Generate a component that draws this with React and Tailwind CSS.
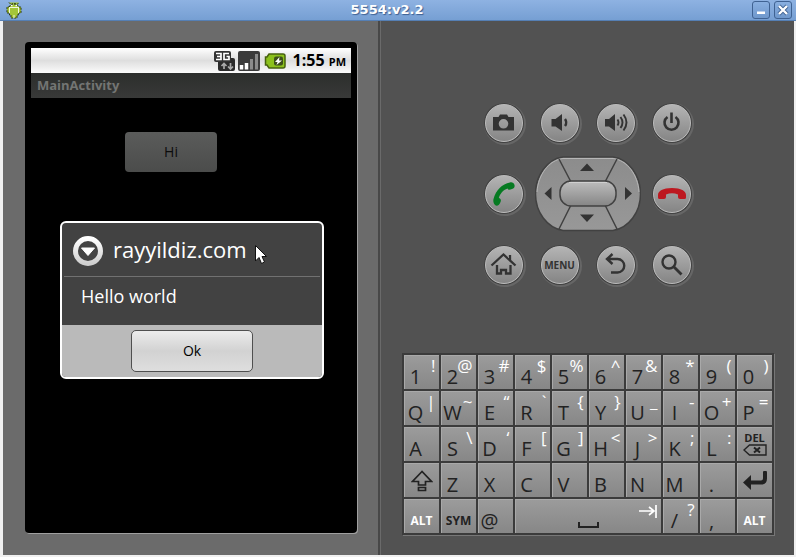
import React from "react";

const keyRows = [
  [["1", "!"], ["2", "@"], ["3", "#"], ["4", "$"], ["5", "%"], ["6", "^"], ["7", "&"], ["8", "*"], ["9", "("], ["0", ")"]],
  [["Q", "|"], ["W", "~"], ["E", "“"], ["R", "`"], ["T", "{"], ["Y", "}"], ["U", "_"], ["I", "-"], ["O", "+"], ["P", "="]],
  [["A", ""], ["S", "\\"], ["D", "‘"], ["F", "["], ["G", "]"], ["H", "<"], ["J", ">"], ["K", ";"], ["L", ":"]],
];

const keyStyle =
  "h-[34px] border-t border-l border-[#a9a9a9] bg-linear-to-b from-[#9b9b9b] to-[#878787] text-[#222]";

function Key({ main, alt }) {
  return (
    <button type="button" className={`${keyStyle} grid`}>
      <span className="col-start-1 row-start-1 w-[22px] self-end text-center text-xl leading-6">{main}</span>
      {alt && (
        <span className="col-start-1 row-start-1 self-start justify-self-end pr-[3px] text-[17px] leading-5 text-white">{alt}</span>
      )}
    </button>
  );
}

function IconKey({ label, className = "", children }) {
  return (
    <button type="button" aria-label={label} className={`${keyStyle} flex items-center justify-center ${className}`}>
      {children}
    </button>
  );
}

function WordKey({ children, className }) {
  return (
    <button type="button" className={`${keyStyle} flex items-end justify-center pb-1 text-xs leading-4 font-bold ${className}`}>
      {children}
    </button>
  );
}

function Keyboard() {
  return (
    <div className="grid grid-cols-[repeat(10,35px)] gap-[2px] bg-[#3b3b3b] p-[2px] shadow-[1px_1px_0_#777]">
      {keyRows.flat().map(([main, alt]) => (
        <Key key={main} main={main} alt={alt} />
      ))}
      <button type="button" aria-label="DEL" className={`${keyStyle} flex flex-col items-center pt-1`}>
        <span className="text-[11px] leading-3 font-bold">DEL</span>
        <svg width="24" height="12" viewBox="0 0 24 12" fill="none" stroke="#222" strokeWidth="1.4">
          <path d="M1 6 6.500 1H23V11H6.500Z" />
          <path d="m11 3.500 6 5M17 3.500l-6 5" strokeWidth="2" />
        </svg>
      </button>
      <IconKey label="Shift">
        <svg width="22" height="22" viewBox="0 0 22 22" fill="none" stroke="#222" strokeWidth="1.700">
          <path d="M11 1.500 1.500 11.500H7.500V15H14.500V11.500H20.500Z" />
          <path d="M7.500 17.500H14.500V20.500H7.500Z" />
        </svg>
      </IconKey>
      {["Z", "X", "C", "V", "B", "N", "M", "."].map((k) => (
        <Key key={k} main={k} />
      ))}
      <IconKey label="Enter">
        <svg width="26" height="20" viewBox="0 0 26 20">
          <path d="M23 1.500V7.500Q23 11.500 19 11.500H8" fill="none" stroke="#222" strokeWidth="4" strokeLinecap="round" />
          <path d="M1 11.500 9 4V19Z" fill="#222" />
        </svg>
      </IconKey>
      <WordKey className="text-white">ALT</WordKey>
      <WordKey className="text-[#222]">SYM</WordKey>
      <Key main="@" />
      <IconKey label="Space" className="col-span-4">
        <svg width="144" height="33" viewBox="0 0 144 33" fill="none">
          <path d="M63 22V27H82V22" stroke="#222" strokeWidth="2" />
          <path d="M123 11H137M133 7 138 11 133 15M140 5V18" stroke="#fff" strokeWidth="1.700" />
        </svg>
      </IconKey>
      <Key main="/" alt="?" />
      <Key main="," />
      <WordKey className="text-white">ALT</WordKey>
    </div>
  );
}

function RoundButton({ label, children }) {
  return (
    <button
      type="button"
      aria-label={label}
      className="flex size-[38px] items-center justify-center rounded-full border border-[#bcbcbc] bg-linear-to-b from-[#b4b4b4] to-[#858585] text-[#333] shadow-[0_0_0_1px_#414141,1px_1px_0_2px_#666]"
    >
      {children}
    </button>
  );
}

function Glyph({ children }) {
  return (
    <svg width="28" height="28" viewBox="0 0 28 28" className="shrink-0" fill="none" stroke="currentColor" strokeWidth="2.400">
      {children}
    </svg>
  );
}

function DPad() {
  return (
    <svg width="106" height="76" viewBox="0 0 106 76" className="-my-px" role="group" aria-label="Directional pad">
      <defs>
        <linearGradient id="pad" x1="0" y1="0" x2="0" y2="1">
          <stop offset="0" stopColor="#8c8c8c" />
          <stop offset="1" stopColor="#989898" />
        </linearGradient>
        <linearGradient id="pill" x1="0" y1="0" x2="0" y2="1">
          <stop offset="0" stopColor="#bebebe" />
          <stop offset="1" stopColor="#858585" />
        </linearGradient>
      </defs>
      <path
        d="M28 1H78C94 3 105.500 20 105.500 38S94 72 78 74.500H28C12 72 .5 56 .5 38S12 3 28 1Z"
        fill="url(#pad)"
        stroke="#414141"
        strokeWidth="1.500"
      />
      <path d="M2 36C3 19 14 4 28 2.500H78C92 4 103 19 104 36" fill="none" stroke="#b6b6b6" />
      <path d="M24 3 36 26M82 3 70 26M36 49 24 73M70 49 82 73" stroke="#414141" strokeWidth="1.500" />
      <rect x="25" y="25" width="56" height="25" rx="11" fill="url(#pill)" stroke="#414141" strokeWidth="1.500" />
      <path d="M34 26.500H72" stroke="#d0d0d0" />
      <path d="M45 15 52 7.500 59 15ZM45 58.500H59L52 66ZM16.500 31V44L9.500 37.500ZM90 31V44L97 37.500Z" fill="#333" />
    </svg>
  );
}

function HardwareControls() {
  return (
    <div className="flex w-[206px] flex-col gap-[15px]">
      <div className="flex justify-between">
        <RoundButton label="Camera">
          <Glyph>
            <path fillRule="evenodd" stroke="none" fill="currentColor" d="M3 8H8.500L10 5.500H17L18.500 8H24V21.500H3ZM13.500 10A4.800 4.800 0 1 0 13.500 19.600A4.800 4.800 0 1 0 13.500 10" />
          </Glyph>
        </RoundButton>
        <RoundButton label="Volume down">
          <Glyph>
            <path stroke="none" fill="currentColor" d="M5.500 10H9.500L16 5V22L9.500 17.500H5.500Z" />
            <path d="M19 10Q21.500 13.500 19 17" />
          </Glyph>
        </RoundButton>
        <RoundButton label="Volume up">
          <Glyph>
            <path stroke="none" fill="currentColor" d="M3 10H7L13 5V22L7 17.500H3Z" />
            <path d="M15.500 10.500Q17.500 13.500 15.500 16.500M18.500 8Q22.500 13.500 18.500 19M21.500 5.500Q27.500 13.500 21.500 21.500" strokeWidth="1.900" />
          </Glyph>
        </RoundButton>
        <RoundButton label="Power">
          <Glyph>
            <path d="M13.500 3.500V14M9.500 8A7 7 0 1 0 17.500 8" strokeWidth="2.600" />
          </Glyph>
        </RoundButton>
      </div>
      <div className="flex h-[74px] items-center justify-between">
        <RoundButton label="Call">
          <svg width="28" height="28" viewBox="0 0 28 28" className="shrink-0">
            <path
              fill="#067a22"
              d="M3.500 19C6 10 12 4 20 2.500C22 2 24 3 24.500 5C25 7 24 8.500 22 9C20 9.500 18.500 10.500 17.500 8.500C13 10 10 14 8.800 18C10.500 18.500 11.500 20 10.500 22C9.500 25 7 27 5 25C3.500 23.500 3 21 3.500 19Z"
            />
          </svg>
        </RoundButton>
        <DPad />
        <RoundButton label="End call">
          <svg width="30" height="28" viewBox="0 0 30 28" className="shrink-0">
            <path
              fill="#bd1820"
              d="M1 15C1 11 6 8 15 8S29 11 29 15V17.500Q29 19 27.500 19H23Q21 19 21 17V14.500Q15 12 9 14.500V17Q9 19 7 19H2.500Q1 19 1 17.500Z"
            />
          </svg>
        </RoundButton>
      </div>
      <div className="flex justify-between">
        <RoundButton label="Home">
          <Glyph>
            <path d="M1.500 14.500 13.500 3.500 25.500 14.500M20 9.500V4M7 14V22.500H11V19H16V22.500H20.500V14" strokeWidth="2.300" />
          </Glyph>
        </RoundButton>
        <RoundButton label="MENU">
          <span className="text-[10px] leading-4 font-bold">MENU</span>
        </RoundButton>
        <RoundButton label="Back">
          <Glyph>
            <path d="M5 8H15.500A6.700 6.700 0 0 1 15.500 21.500H9M10.500 3 5 8 10.500 13" />
          </Glyph>
        </RoundButton>
        <RoundButton label="Search">
          <Glyph>
            <circle cx="11" cy="11" r="6.500" />
            <path d="M15.500 15.500 23.500 23.500" strokeWidth="2.800" />
          </Glyph>
        </RoundButton>
      </div>
    </div>
  );
}

function TitleBar() {
  const windowButton =
    "flex size-[18px] items-center justify-center rounded-[3px] border border-[#3f6292] bg-linear-to-b from-[#89afe0] to-[#6f98cc]";
  return (
    <header className="grid h-[21px] grid-cols-[auto_1fr_auto] items-center border-b border-[#557fb4] bg-linear-to-b from-[#8eb2e2] to-[#769fd3] pr-1 pl-[6px]">
      <svg width="16" height="18" viewBox="0 0 16 18">
        <path
          d="M3 1.500 5 3.500Q8 2 11 3.500L13 1.500M3.500 6Q4 3 8 3T12.500 6H15V12H12.500V14H11V17H5V14H3.500V12H1V6Z"
          fill="#a4c639"
          stroke="#26330b"
          strokeDasharray="2 1"
        />
        <path d="M3 6.500H13M3.500 7V12M12.500 7V12M8 14V17" stroke="#f1f7dc" />
        <path d="M5 4.500H6.500M9.500 4.500H11" stroke="#fff" strokeWidth="1.500" />
      </svg>
      <h1 className="text-center font-['DejaVu_Sans',sans-serif] text-[13px] leading-4 font-bold text-white [text-shadow:1px_1px_1px_#3c5f91]">
        5554:v2.2
      </h1>
      <div className="flex gap-1">
        <button type="button" aria-label="Minimize" className={windowButton}>
          <svg width="12" height="12" viewBox="0 0 12 12">
            <rect x="2" y="7.500" width="8" height="2.500" fill="#fff" />
          </svg>
        </button>
        <button type="button" aria-label="Close" className={windowButton}>
          <svg width="12" height="12" viewBox="0 0 12 12">
            <path d="m2 2 8 8M10 2l-8 8" stroke="#3f6292" strokeWidth="4" />
            <path d="m2 2 8 8M10 2l-8 8" stroke="#fff" strokeWidth="2.400" />
          </svg>
        </button>
      </div>
    </header>
  );
}

function StatusBar() {
  return (
    <div className="flex h-[25px] items-center justify-end gap-[3px] bg-linear-to-b from-white via-[#dedede] to-[#fbfbfb] pr-[5px] text-black">
      <svg width="21" height="20" viewBox="0 0 21 20">
        <rect x="4" y="7" width="17" height="13" rx="2" fill="#2b2b2b" />
        <rect x="0" y="0" width="17" height="11" rx="2" fill="#333" />
        <path d="M2 2.500H7V8.500H2M3 5.500H7M15 2.500H10V8.500H15V5.500H12.500" fill="none" stroke="#fff" strokeWidth="1.700" />
        <path d="M10 18V13M7.500 15 10 12.500 12.500 15M16.500 12V17M14 15.500 16.500 18 19 15.500" fill="none" stroke="#aaa" strokeWidth="1.700" />
      </svg>
      <svg width="22" height="20" viewBox="0 0 22 20">
        <rect width="22" height="20" rx="2" fill="#3b3b3b" />
        <path d="M3.500 18.500V14M8.500 18.500V12" stroke="#fff" strokeWidth="3.500" />
        <path d="M13.500 18.500V8M18.500 18.500V3" stroke="#8a8a8a" strokeWidth="3" />
      </svg>
      <svg width="22" height="16" viewBox="0 0 22 16" className="ml-px">
        <path d="M5 1H19Q21 1 21 3V13Q21 15 19 15H5L3 12H1.500V4H3Z" fill="#8cc11c" stroke="#47610f" strokeWidth="1.500" />
        <rect x="10" y="3.500" width="9" height="9" rx="2" fill="#3d4f1a" />
        <path d="M15.500 4 11 9H13.500L12.500 12 18 7.500H15Z" fill="#fff" />
      </svg>
      <span className="ml-1 text-base leading-6 font-bold">
        1:55 <span className="text-[11px]">PM</span>
      </span>
    </div>
  );
}

function Dialog() {
  return (
    <section
      role="dialog"
      aria-labelledby="dialog-title"
      className="relative mr-[27px] ml-[29px] mt-[49px] overflow-hidden rounded-md border-2 border-white bg-[#424242] text-white"
    >
      <div className="mx-[2px] flex h-[54px] items-center gap-2 border-b border-[#717171] pl-[7px]">
        <svg width="34" height="34" viewBox="0 0 34 34">
          <defs>
            <linearGradient id="ring" x1="0" y1="0" x2="0" y2="1">
              <stop offset="0" stopColor="#fff" />
              <stop offset="1" stopColor="#cfcfcf" />
            </linearGradient>
          </defs>
          <circle cx="17" cy="18" r="12.500" fill="#444" stroke="url(#ring)" strokeWidth="5" />
          <path d="M10.500 15H23.500L17 22.500Z" fill="#fff" stroke="#fff" strokeLinejoin="round" />
        </svg>
        <h2 id="dialog-title" className="pb-[2px] text-[22px] leading-7">rayyildiz.com</h2>
      </div>
      <p className="h-12 pt-[7px] pl-[19px] text-lg leading-6">Hello world</p>
      <div className="flex h-[52px] items-center justify-center bg-[#bababa]">
        <button
          type="button"
          className="h-[42px] w-[122px] rounded-[5px] border border-[#4f4f4f] bg-linear-to-b from-[#ececec] via-[#d2d2d2] to-[#dedede] text-sm text-black"
        >
          Ok
        </button>
      </div>
      <svg width="14" height="22" viewBox="0 0 14 22" className="absolute top-[21px] left-[192px]">
        <path d="M1.500 1.500V17L5 13.500 7.500 19.500 10.500 18 8 12.500H12.500Z" fill="#fff" stroke="#111" />
      </svg>
    </section>
  );
}

function PhoneScreen() {
  return (
    <div className="h-[491px] rounded-[4px] bg-black p-[6px] shadow-[1px_1px_0_#a0a0a0]">
      <StatusBar />
      <div className="h-[25px] bg-linear-to-b from-[#2c2e2c] to-[#383938] pl-[6px] text-[13px] leading-6 font-bold text-[#737573]">MainActivity</div>
      <button
        type="button"
        className="mt-[34px] ml-[94px] block h-10 w-[92px] rounded bg-linear-to-b from-[#5b5c5b] to-[#4b4c4b] text-sm text-[#0c0c0c]"
      >
        Hi
      </button>
      <Dialog />
    </div>
  );
}

export default function App() {
  return (
    <div className="flex min-h-screen flex-col bg-[#f0f0f0] font-['Open_Sans','Noto_Sans',sans-serif]">
      <TitleBar />
      <main className="mr-[2px] mb-[2px] ml-[3px] flex grow">
        <div className="w-[377px] shrink-0 border-r-2 border-[#484848] bg-[#6b6b6b] pt-[21px] pr-[21px] pl-[22px]">
          <PhoneScreen />
        </div>
        <div className="flex grow flex-col items-center gap-[69px] border-l border-[#6a6a6a] bg-[#525252] pt-[83px]">
          <HardwareControls />
          <Keyboard />
        </div>
      </main>
    </div>
  );
}
